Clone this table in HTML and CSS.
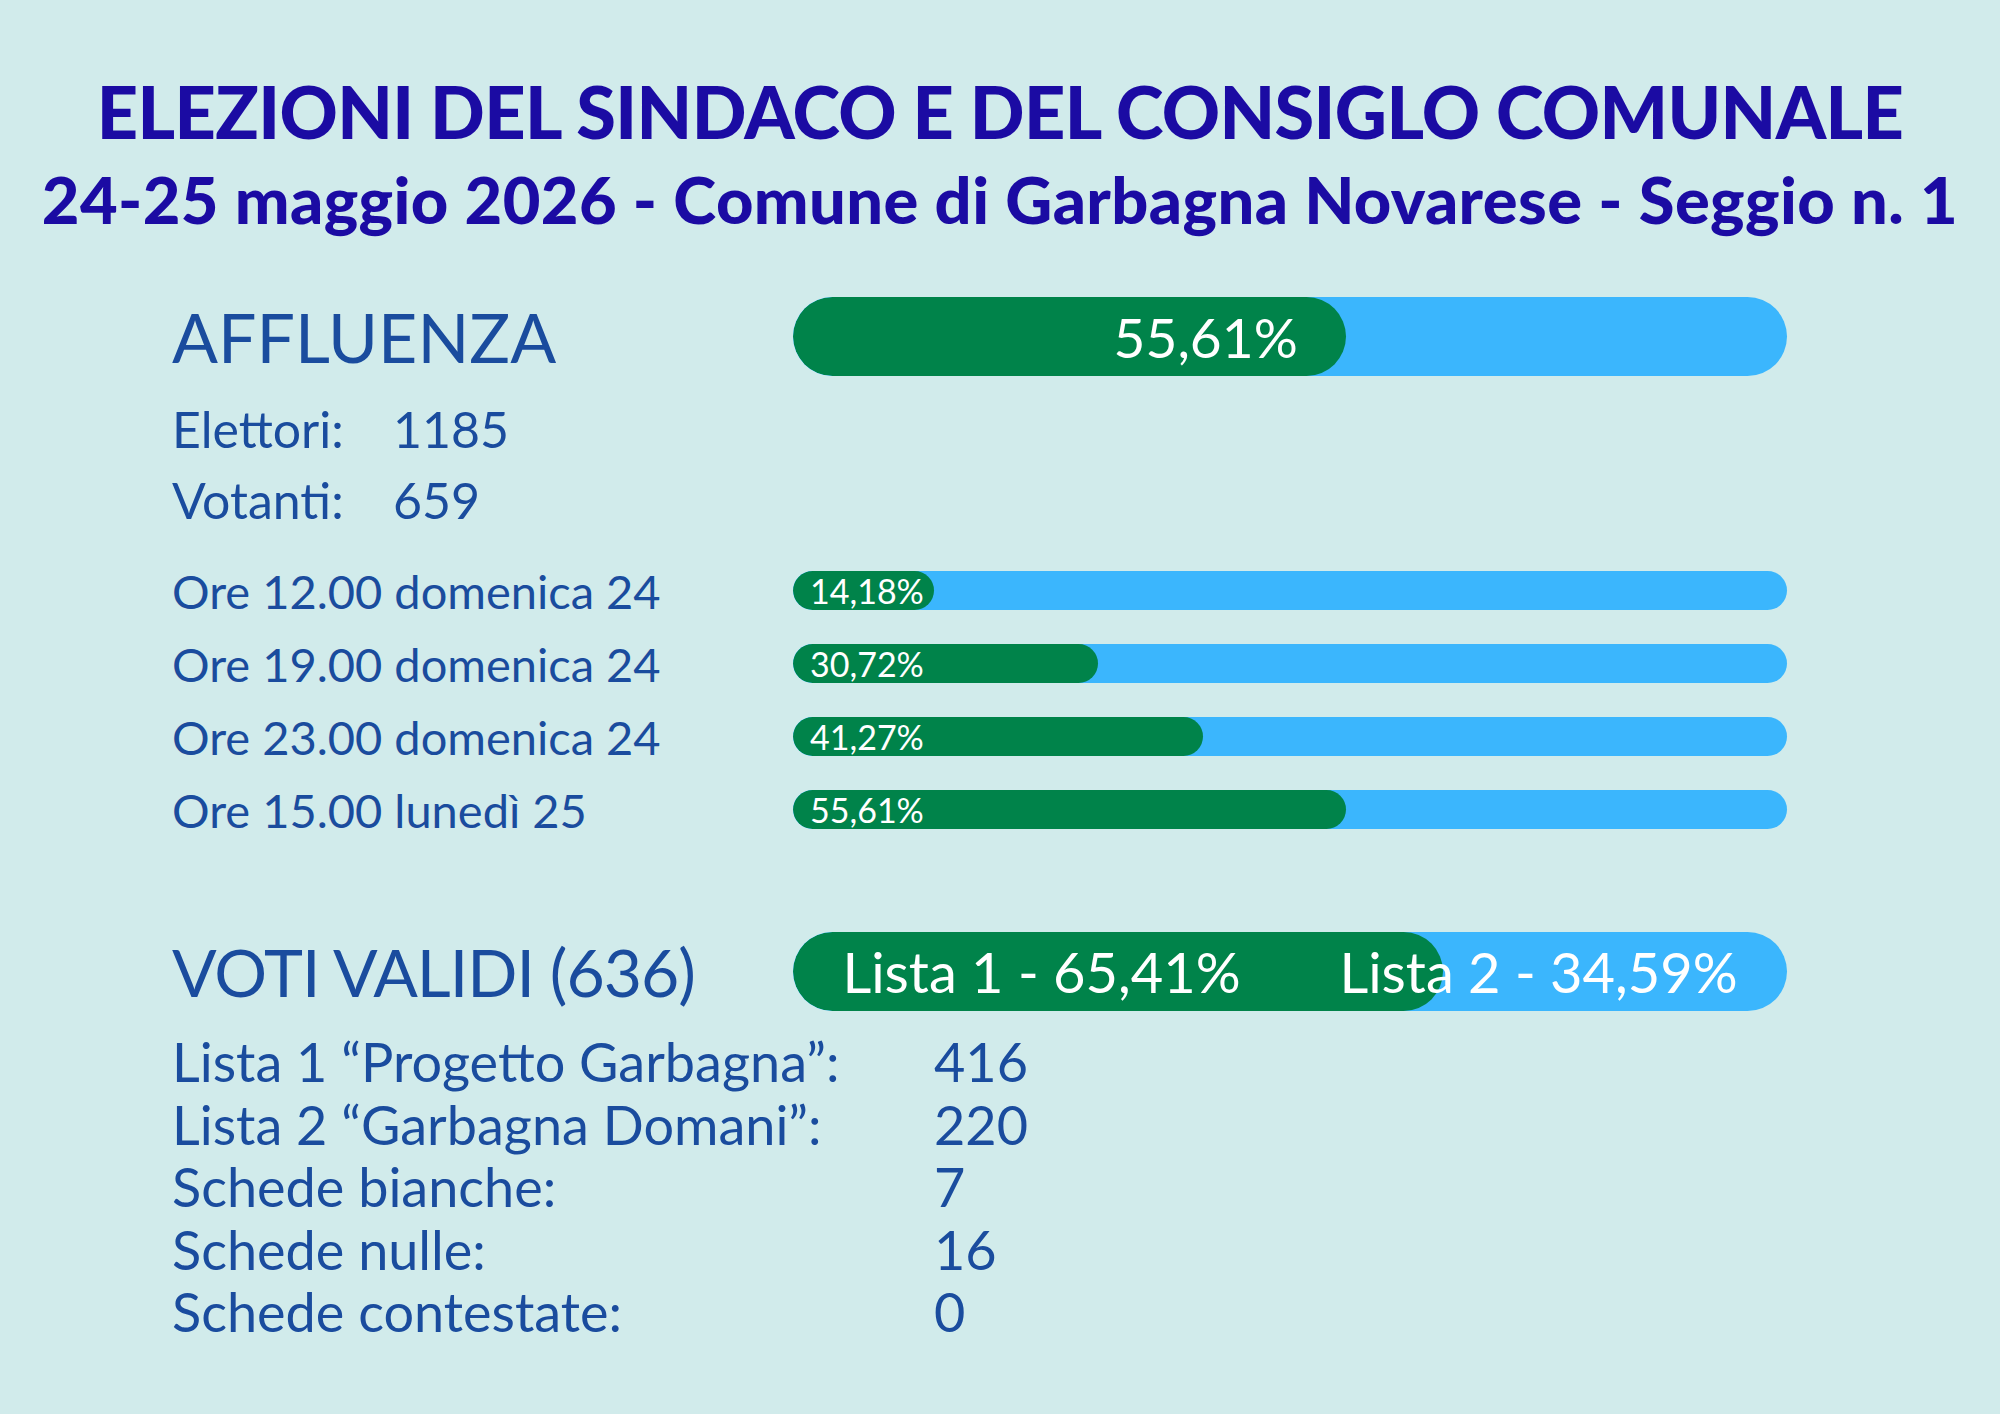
FILE: index.html
```html
<!DOCTYPE html>
<html lang="it">
<head>
<meta charset="utf-8">
<title>Elezioni Garbagna Novarese</title>
<link rel="stylesheet" href="styles.css">
</head>
<body>
<div class="page">
  <header class="head">
    <h1 class="title">ELEZIONI DEL SINDACO E DEL CONSIGLO COMUNALE</h1>
    <h2 class="subtitle">24-25 maggio 2026 - Comune di Garbagna Novarese - Seggio n. 1</h2>
  </header>

  <section class="turnout">
    <div class="big-row">
      <div class="section-label">AFFLUENZA</div>
      <div class="bar bar-big">
        <div class="fill fill-big" style="width:55.61%"><span>55,61%</span></div>
      </div>
    </div>
    <div class="kv kv-first"><span class="k">Elettori:</span><span class="v">1185</span></div>
    <div class="kv"><span class="k">Votanti:</span><span class="v">659</span></div>

    <div class="ore-list">
      <div class="ore-row">
        <div class="ore-label">Ore 12.00 domenica 24</div>
        <div class="bar bar-small"><div class="fill fill-small" style="width:14.18%"><span>14,18%</span></div></div>
      </div>
      <div class="ore-row">
        <div class="ore-label">Ore 19.00 domenica 24</div>
        <div class="bar bar-small"><div class="fill fill-small" style="width:30.72%"><span>30,72%</span></div></div>
      </div>
      <div class="ore-row">
        <div class="ore-label">Ore 23.00 domenica 24</div>
        <div class="bar bar-small"><div class="fill fill-small" style="width:41.27%"><span>41,27%</span></div></div>
      </div>
      <div class="ore-row">
        <div class="ore-label">Ore 15.00 lunedì 25</div>
        <div class="bar bar-small"><div class="fill fill-small" style="width:55.61%"><span>55,61%</span></div></div>
      </div>
    </div>
  </section>

  <section class="votes">
    <div class="big-row">
      <div class="section-label section-label-voti">VOTI VALIDI (636)</div>
      <div class="bar bar-big bar-split">
        <div class="split-fill" style="width:65.41%"></div>
        <div class="split-labels">
          <span class="split-half">Lista 1 - 65,41%</span>
          <span class="split-half">Lista 2 - 34,59%</span>
        </div>
      </div>
    </div>
    <div class="results">
      <span class="r-label">Lista 1 “Progetto Garbagna”:</span><span class="r-value">416</span>
      <span class="r-label">Lista 2 “Garbagna Domani”:</span><span class="r-value">220</span>
      <span class="r-label">Schede bianche:</span><span class="r-value">7</span>
      <span class="r-label">Schede nulle:</span><span class="r-value">16</span>
      <span class="r-label">Schede contestate:</span><span class="r-value">0</span>
    </div>
  </section>
</div>
</body>
</html>
```

FILE: styles.css
```css
html, body {
  margin: 0;
  padding: 0;
  background: #d1ebeb;
}

body {
  width: 2000px;
  height: 1414px;
  overflow: hidden;
  font-family: "Lato", "Liberation Sans", sans-serif;
  font-weight: 400;
  color: #1a4c9e;
}

.page {
  display: flex;
  flex-direction: column;
}

.head {
  display: flex;
  flex-direction: column;
  align-items: center;
  padding-top: 71px;
}

.title {
  margin: 0;
  font-family: "Lato", sans-serif;
  font-weight: 900;
  font-size: 72px;
  letter-spacing: -0.6px;
  line-height: 80px;
  color: #1b0ba3;
  white-space: nowrap;
}

.subtitle {
  margin: 13px 0 0;
  font-family: "Lato", sans-serif;
  font-weight: 900;
  font-size: 65px;
  letter-spacing: 0.4px;
  line-height: 70px;
  color: #1b0ba3;
  white-space: nowrap;
}

.turnout,
.votes {
  display: flex;
  flex-direction: column;
  padding-left: 172px;
}

.turnout {
  margin-top: 63px;
}

.votes {
  margin-top: 86px;
}

.big-row {
  display: flex;
  align-items: center;
  height: 79px;
}

.section-label {
  width: 621px;
  font-size: 68px;
  line-height: 79px;
  white-space: nowrap;
}

.section-label-voti {
  font-size: 66px;
  letter-spacing: -1px;
}

.bar {
  position: relative;
  width: 994px;
  background: #3bb6fd;
  overflow: hidden;
}

.bar-big {
  height: 79px;
  border-radius: 40px;
}

.bar-small {
  height: 39px;
  border-radius: 20px;
}

.fill {
  height: 100%;
  background: #00834a;
  display: flex;
  align-items: center;
  box-sizing: border-box;
  white-space: nowrap;
  color: #ffffff;
}

.fill-big {
  border-radius: 40px;
  justify-content: flex-end;
  padding-right: 48px;
  font-size: 55px;
}

.fill-small {
  border-radius: 20px;
  padding-left: 17px;
  font-size: 34px;
}

.kv {
  display: flex;
  font-size: 50px;
  line-height: 71px;
}

.kv-first {
  margin-top: 18px;
}

.k {
  width: 221px;
}

.ore-list {
  display: flex;
  flex-direction: column;
  margin-top: 18px;
}

.ore-row {
  display: flex;
  align-items: center;
  height: 73px;
}

.ore-label {
  width: 621px;
  font-size: 47px;
  white-space: nowrap;
}

.bar-split .split-fill {
  position: absolute;
  left: 0;
  top: 0;
  bottom: 0;
  background: #00834a;
  border-radius: 40px;
}

.split-labels {
  position: relative;
  display: flex;
  height: 100%;
  color: #ffffff;
  font-size: 56px;
}

.split-half {
  flex: 1;
  display: flex;
  align-items: center;
  justify-content: center;
  white-space: nowrap;
}

.results {
  display: grid;
  grid-template-columns: 762px auto;
  margin-top: 20px;
  font-size: 54px;
  line-height: 62.5px;
  white-space: nowrap;
}
```
